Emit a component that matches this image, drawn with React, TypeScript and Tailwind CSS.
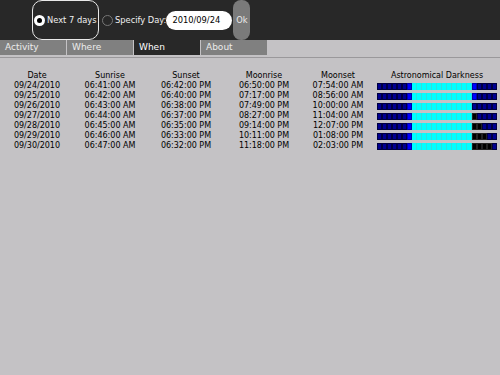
import React from "react";

// Sky data for one week
const rows = [
  { date: "09/24/2010", sunrise: "06:41:00 AM", sunset: "06:42:00 PM", moonrise: "06:50:00 PM", moonset: "07:54:00 AM", tail: "BDDDD" },
  { date: "09/25/2010", sunrise: "06:42:00 AM", sunset: "06:40:00 PM", moonrise: "07:17:00 PM", moonset: "08:56:00 AM", tail: "BDDDD" },
  { date: "09/26/2010", sunrise: "06:43:00 AM", sunset: "06:38:00 PM", moonrise: "07:49:00 PM", moonset: "10:00:00 AM", tail: "DDDDD" },
  { date: "09/27/2010", sunrise: "06:44:00 AM", sunset: "06:37:00 PM", moonrise: "08:27:00 PM", moonset: "11:04:00 AM", tail: "KDDDD" },
  { date: "09/28/2010", sunrise: "06:45:00 AM", sunset: "06:35:00 PM", moonrise: "09:14:00 PM", moonset: "12:07:00 PM", tail: "KKDDD" },
  { date: "09/29/2010", sunrise: "06:46:00 AM", sunset: "06:33:00 PM", moonrise: "10:11:00 PM", moonset: "01:08:00 PM", tail: "KKKDD" },
  { date: "09/30/2010", sunrise: "06:47:00 AM", sunset: "06:32:00 PM", moonrise: "11:18:00 PM", moonset: "02:03:00 PM", tail: "KKKKD" },
];

const tabs = ["Activity", "Where", "When", "About"];

function Cell({ kind }: { kind: string }) {
  if (kind === "C") return <div className="h-full w-[5px] bg-[#00ffff] border-r border-[#33dddd]" />;
  if (kind === "B") return <div className="h-full w-[5px] bg-[#0000ff] border border-[#0000aa]" />;
  if (kind === "K") return <div className="h-full w-[5px] bg-[#000000] border border-[#222222]" />;
  return <div className="h-full w-[5px] bg-[#000090] border border-[#000040]" />;
}

function DarknessBar({ tail }: { tail: string }) {
  const cells = ("DDDDDDB" + "CCCCCCCCCCCC" + tail).split("");
  return (
    <div className="flex h-[7px] w-[120px] bg-[#000040]">
      {cells.map((c, i) => (
        <Cell key={i} kind={c} />
      ))}
    </div>
  );
}

export default function App() {
  return (
    <div className="w-[500px] h-[375px] bg-[#c4c2c5] overflow-hidden text-[8px]" style={{ fontFamily: "'DejaVu Sans', sans-serif" }}>
      <div className="h-[40px] bg-[#282828] flex items-center text-[8.3px] whitespace-nowrap">
        <div className="ml-[32px] h-[40px] w-[67px] shrink-0 rounded-[10px] border border-[#e8e8e8] flex items-center pl-px">
          <div className="w-[11px] h-[11px] shrink-0 rounded-full bg-white flex items-center justify-center">
            <div className="w-[5px] h-[5px] rounded-full bg-black" />
          </div>
          <span className="ml-[2px] text-[#f0f0f0]">Next 7 days</span>
        </div>
        <div className="ml-[3px] w-[11px] h-[11px] shrink-0 rounded-full border border-[#777]" />
        <span className="ml-[2px] text-[#f0f0f0]">Specify Day:</span>
        <div className="h-[19px] w-[66px] shrink-0 rounded-full bg-white flex items-center pl-[6px] text-black">2010/09/24</div>
        <div className="ml-px h-[40px] w-[17px] shrink-0 rounded-[8px] bg-[#7a7a7a] flex items-center justify-center text-[#eaeaea]">Ok</div>
      </div>
      <div className="flex h-[15px] text-[9px]">
        {tabs.map((t) => (
          <div
            key={t}
            className={
              t === "When"
                ? "w-[66px] mr-px bg-[#282828] text-white pl-[5px] flex items-center"
                : "w-[66px] mr-px bg-[#808080] text-[#ececec] pl-[5px] flex items-center"
            }
          >
            {t}
          </div>
        ))}
      </div>
      <div className="mt-[2px] h-px bg-[#9a989b]" />
      <div className="mt-[13px] text-black leading-[10px]">
        <div className="grid grid-cols-[74px_72px_80px_76px_72px_126px] text-center">
          {["Date", "Sunrise", "Sunset", "Moonrise", "Moonset", "Astronomical Darkness"].map((h) => (
            <div key={h}>{h}</div>
          ))}
        </div>
        {rows.map((r) => (
          <div key={r.date} className="grid grid-cols-[74px_72px_80px_76px_72px_126px] text-center items-center h-[10px]">
            <div>{r.date}</div>
            <div>{r.sunrise}</div>
            <div>{r.sunset}</div>
            <div>{r.moonrise}</div>
            <div>{r.moonset}</div>
            <div className="flex pl-[3px]">
              <DarknessBar tail={r.tail} />
            </div>
          </div>
        ))}
      </div>
    </div>
  );
}
